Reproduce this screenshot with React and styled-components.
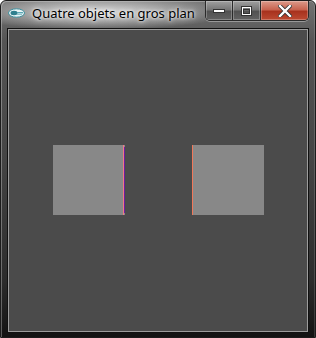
import React from "react";
import styled, { createGlobalStyle } from "styled-components";

const Global = createGlobalStyle`
  html, body {
    margin: 0;
    padding: 0;
    background: #ffffff;
  }
`;

const Window = styled.div`
  box-sizing: border-box;
  width: 316px;
  height: 338px;
  display: flex;
  flex-direction: column;
  border: 1px solid #1c1c1c;
  border-radius: 6px 6px 0 0;
  background: linear-gradient(
    to bottom,
    #727272 0px,
    #555555 40px,
    #444444 160px,
    #2c2c2c 280px,
    #121212 338px
  );
  box-shadow: inset 1px 1px 0 rgba(255, 255, 255, 0.3), inset -1px 0 0 rgba(255, 255, 255, 0.15);
  overflow: hidden;
`;

const TitleBar = styled.div`
  height: 27px;
  display: flex;
  align-items: flex-start;
  background: radial-gradient(
    ellipse 135px 18px at 95px 11px,
    rgba(230, 230, 230, 0.9) 0%,
    rgba(195, 195, 195, 0.6) 55%,
    rgba(120, 120, 120, 0) 100%
  );
`;

const AppIcon = styled.svg`
  margin: 7px 0 0 7px;
  flex: none;
`;

const Title = styled.span`
  margin: 3px 0 0 7px;
  font-family: "Noto Sans", "Open Sans", sans-serif;
  font-size: 13px;
  line-height: 18px;
  color: #000000;
  white-space: nowrap;
  text-shadow: 0 0 6px #ffffff, 0 0 3px #ffffff;
`;

const Controls = styled.div`
  margin-left: auto;
  margin-right: 6px;
  display: flex;
  height: 19px;
  border: 1px solid #2a2a2a;
  border-top: none;
  border-radius: 0 0 5px 5px;
  overflow: hidden;
  box-shadow: 0 1px 0 rgba(255, 255, 255, 0.35);
`;

const CtrlButton = styled.div`
  width: ${(p) => p.w}px;
  height: 100%;
  display: flex;
  align-items: center;
  justify-content: center;
  border-left: ${(p) => (p.first ? "none" : "1px solid #2a2a2a")};
  background: ${(p) =>
    p.close
      ? "linear-gradient(to bottom, #dc9a8a 0%, #c86450 45%, #a8321e 55%, #bc4a32 100%)"
      : "linear-gradient(to bottom, #a0a0a0 0%, #777777 45%, #525252 55%, #626262 100%)"};
  box-shadow: inset 0 0 0 1px rgba(255, 255, 255, 0.25);
`;

const ClientFrame = styled.div`
  flex: 1;
  display: flex;
  padding: 0 6px 4px 6px;
`;

const Client = styled.div`
  flex: 1;
  display: flex;
  align-items: center;
  justify-content: center;
  gap: 67px;
  padding-bottom: 2px;
  background: #4b4b4b;
  border: 1px solid #9c9c9c;
  box-shadow: 0 0 0 1px #111111;
  margin: 1px;
`;

const Square = styled.div`
  width: 72px;
  height: 70px;
  display: flex;
  flex-direction: ${(p) => (p.side === "left" ? "row-reverse" : "row")};
  align-items: center;
  background: #888888;
`;

const Edge = styled.div`
  width: 1px;
  align-self: stretch;
  background: ${(p) => p.color};
`;

const Fringe = styled.div`
  width: 1px;
  height: 66px;
  background: ${(p) => p.color};
`;

const Plane = styled.div`
  flex: 1;
  align-self: stretch;
`;

const App = () => {
  return (
    <>
      <Global />
      <Window>
        <TitleBar>
          <AppIcon width="17" height="10" viewBox="0 0 17 10">
            <ellipse cx="8.5" cy="5" rx="8" ry="4.2" fill="#e8f4f6" stroke="#3c8e9c" strokeWidth="1" />
            <ellipse cx="6" cy="5" rx="3.5" ry="2.2" fill="#2f7f8e" />
            <rect x="9" y="4" width="6" height="1.4" fill="#5aa7b4" />
            <rect x="9" y="6" width="5" height="1" fill="#8cc4cd" />
          </AppIcon>
          <Title>Quatre objets en gros plan</Title>
          <Controls>
            <CtrlButton w={26} first>
              <svg width="12" height="4" viewBox="0 0 12 4">
                <rect x="0.5" y="0.5" width="11" height="3" fill="#ffffff" stroke="#333" strokeWidth="1" />
              </svg>
            </CtrlButton>
            <CtrlButton w={27}>
              <svg width="11" height="10" viewBox="0 0 11 10">
                <rect x="0.5" y="0.5" width="10" height="9" fill="none" stroke="#333" strokeWidth="1" />
                <rect x="1.5" y="1.5" width="8" height="7" fill="none" stroke="#ffffff" strokeWidth="1" />
                <rect x="2.5" y="3.5" width="6" height="4" fill="none" stroke="#333" strokeWidth="1" />
              </svg>
            </CtrlButton>
            <CtrlButton w={47} close>
              <svg width="14" height="12" viewBox="0 0 14 12">
                <path d="M2 1 L12 11 M12 1 L2 11" stroke="#333" strokeWidth="4" strokeLinecap="square" />
                <path d="M2 1 L12 11 M12 1 L2 11" stroke="#ffffff" strokeWidth="2.4" strokeLinecap="square" />
              </svg>
            </CtrlButton>
          </Controls>
        </TitleBar>
        <ClientFrame>
          <Client>
            <Square side="left">
              <Fringe color="#6a1ea0" />
              <Edge color="#f07a86" />
              <Plane />
            </Square>
            <Square side="right">
              <Edge color="#f0785a" />
              <Plane />
            </Square>
          </Client>
        </ClientFrame>
      </Window>
    </>
  );
};

export default App;
